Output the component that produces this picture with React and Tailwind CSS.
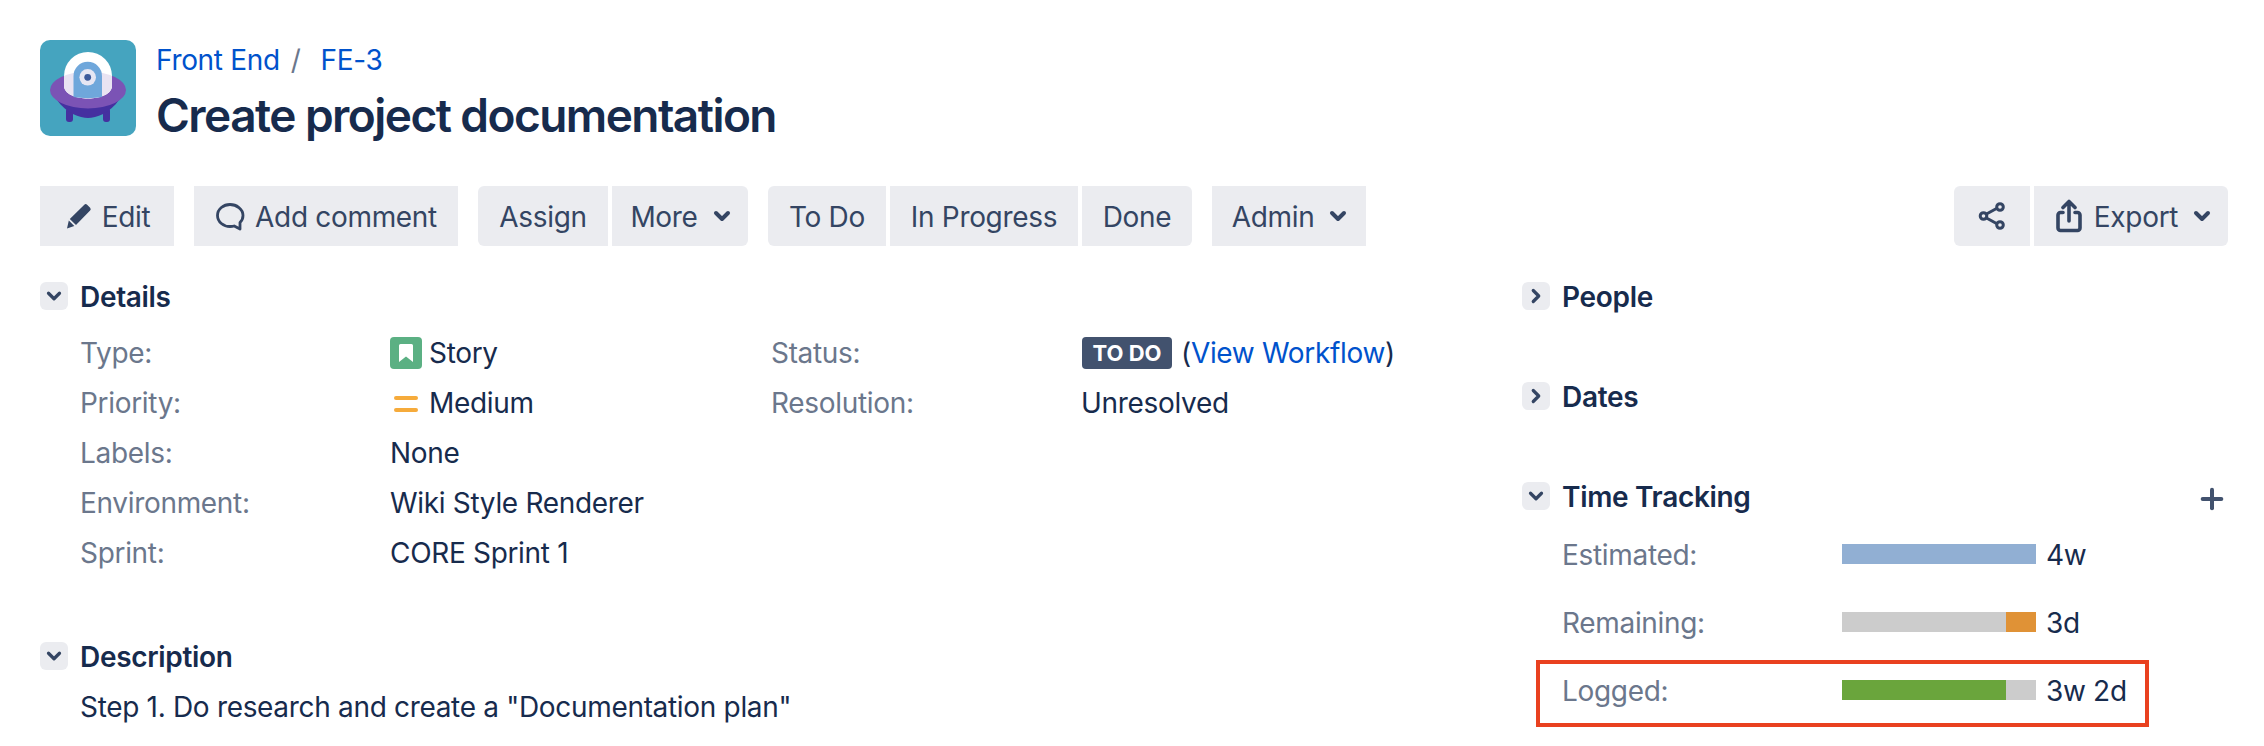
import { ChevronDown, ChevronRight, Plus } from "lucide-react";

const detailsLeft = [
  ["Type:", <span className="flex items-center gap-[7px]"><StoryIcon />Story</span>],
  ["Priority:", <span className="flex items-center gap-[7px]"><MediumIcon />Medium</span>],
  ["Labels:", "None"],
  ["Environment:", "Wiki Style Renderer"],
  ["Sprint:", "CORE Sprint 1"],
];

function Logo() {
  const dome = "M24 36 a24 24 0 0 1 48 0 V46 C72 54 60 58.500 48 58.500 C36 58.500 24 54 24 46 Z";
  return (
    <svg width="96" height="96" viewBox="0 0 96 96" className="shrink-0">
      <defs>
        <clipPath id="saucer"><ellipse cx="48" cy="50" rx="38" ry="18.500" /></clipPath>
      </defs>
      <rect width="96" height="96" rx="10" fill="#45A4BF" />
      <rect x="26" y="68" width="7" height="14" rx="3" fill="#4530A0" />
      <rect x="63" y="68" width="7" height="14" rx="3" fill="#4530A0" />
      <path d="M17 60 C26 73 40 78 48 78 C56 78 70 73 79 60 Z" fill="#4530A0" />
      <ellipse cx="48" cy="50" rx="38" ry="18.500" fill="#7B53B5" />
      <path d={dome} fill="#FFFFFF" />
      <path clipPath="url(#saucer)" d={dome} fill="#E9E3F2" />
      <path d="M33.500 36 a14.250 14.250 0 0 1 28.500 0 V57 C54 58.500 42 58.500 33.500 57 Z" fill="#6FA7DB" />
      <circle cx="47.700" cy="37.300" r="8.300" fill="#E6E6F3" />
      <circle cx="47.700" cy="37.300" r="3.400" fill="#3D5A9B" />
    </svg>
  );
}

function StoryIcon() {
  return (
    <svg width="32" height="32" viewBox="0 0 32 32" className="shrink-0">
      <rect width="32" height="32" rx="4" fill="#5BB083" />
      <path d="M9 8.500 a1.500 1.500 0 0 1 1.500 -1.500 h11 a1.500 1.500 0 0 1 1.500 1.500 V25 L16 19.500 L9 25 Z" fill="#FFFFFF" />
    </svg>
  );
}

function MediumIcon() {
  return (
    <svg width="32" height="32" viewBox="0 0 32 32" className="shrink-0">
      <rect x="4" y="9" width="24" height="4" rx="2" fill="#F6AB3B" />
      <rect x="4" y="21" width="24" height="4" rx="2" fill="#F6AB3B" />
    </svg>
  );
}

function PenIcon() {
  return (
    <svg width="30" height="30" viewBox="0 0 30 30" className="shrink-0">
      <path d="M20.300 3.800 a2 2 0 0 1 2.800 0 l3 3 a2 2 0 0 1 0 2.800 L12 24 L5.800 17.900 Z M4.800 19.600 L10.300 25 L3 27.500 Z" fill="#344563" />
    </svg>
  );
}

function CommentIcon() {
  return (
    <svg width="30" height="30" viewBox="0 0 30 30" className="shrink-0" fill="none">
      <path d="M15 3.500 C8.600 3.500 2.500 7.900 2.500 14.500 c0 6.600 6.100 11 12.500 11 c1.100 0 2.900 -.1 4.200 -.5 l5.800 3 v-6.500 c1.800 -1.700 3 -4.100 3 -7 C28 7.900 21.400 3.500 15 3.500 Z" stroke="#344563" strokeWidth="2.800" strokeLinejoin="round" />
    </svg>
  );
}

function ShareIcon() {
  return (
    <svg width="30" height="30" viewBox="0 0 30 30" className="shrink-0" fill="none" stroke="#344563" strokeWidth="3">
      <path d="M9.500 13 L19.500 7.500 M9.500 17 L19.500 22.500" />
      <circle cx="6.500" cy="15" r="3.300" />
      <circle cx="23" cy="6" r="3.300" />
      <circle cx="23" cy="24" r="3.300" />
    </svg>
  );
}

function ExportIcon() {
  return (
    <svg width="26" height="34" viewBox="0 0 26 34" className="shrink-0" fill="none" stroke="#344563" strokeWidth="3.600" strokeLinecap="round" strokeLinejoin="round">
      <path d="M7 13.500 H4.500 a2.500 2.500 0 0 0 -2.500 2.500 V29 a2.500 2.500 0 0 0 2.500 2.500 h17 a2.500 2.500 0 0 0 2.500 -2.500 V16 a2.500 2.500 0 0 0 -2.500 -2.500 H19" />
      <path d="M13 22 V3 M7 8.500 L13 2.500 L19 8.500" />
    </svg>
  );
}

function Btn({ children, className = "" }) {
  return (
    <button className={"h-[60px] flex items-center justify-center bg-[#EBECF0] text-[#344563] text-[28px] rounded-none " + className}>
      {children}
    </button>
  );
}

function BtnText({ children }) {
  return <span className="mt-[2px]">{children}</span>;
}

function Caret() {
  return <ChevronDown size={24} strokeWidth={4} color="#344563" className="shrink-0" />;
}

function SectionHead({ title, open = true, action }) {
  return (
    <div className="flex items-center h-7">
      <span className="w-7 h-7 rounded-md bg-[#EBECF0] flex items-center justify-center mr-3">
        {open ? <ChevronDown size={22} strokeWidth={3.500} color="#344563" /> : <ChevronRight size={22} strokeWidth={3.500} color="#344563" />}
      </span>
      <h4 className="font-semibold text-[28px] text-[#172B4D] mt-[2px]">{title}</h4>
      {action}
    </div>
  );
}

function Row({ label, children }) {
  return (
    <div className="flex items-center h-[50px]">
      <span className="w-[310px] text-[#6B778C]">{label}</span>
      <div>{children}</div>
    </div>
  );
}

function TimeBar({ label, value, bg, fill, fillWidth, fillRight }) {
  return (
    <div className="flex items-center h-5">
      <span className="w-[280px] ml-10 mt-[2px] text-[#6B778C]">{label}</span>
      <div className={"w-[194px] h-5 flex " + bg + (fillRight ? " justify-end" : "")}>
        <div className={"h-5 " + fill} style={{ width: fillWidth }} />
      </div>
      <span className="ml-[10px] mt-[2px]">{value}</span>
    </div>
  );
}

export default function App() {
  return (
    <div className="h-[746px] overflow-hidden bg-white pl-10 pr-9 pt-10 text-[#172B4D] text-[28px] leading-[50px] tracking-[-0.32px]" style={{ fontFamily: "Inter, sans-serif" }}>

      {/* HEADER */}
      <div className="flex items-start h-24">
        <Logo />
        <div className="ml-[20px]">
          <div className="flex items-center h-10 text-[#0052CC] leading-10">
            <a>Front End</a>
            <span className="text-[#6B778C] ml-[11px] mr-[20px]">/</span>
            <a>FE-3</a>
          </div>
          <h1 className="text-[46px] font-semibold leading-[56px] tracking-[-1.55px] mt-[7px]">Create project documentation</h1>
        </div>
      </div>

      {/* TOOLBAR */}
      <div className="flex mt-[50px] leading-none">
        <Btn className="w-[134px] rounded-md gap-2"><PenIcon /><BtnText>Edit</BtnText></Btn>
        <Btn className="w-[264px] ml-5 rounded-md gap-[10px]"><CommentIcon /><BtnText>Add comment</BtnText></Btn>
        <Btn className="w-[130px] ml-5 rounded-l-md"><BtnText>Assign</BtnText></Btn>
        <Btn className="w-[136px] ml-1 rounded-r-md gap-3 pl-1"><BtnText>More</BtnText><Caret /></Btn>
        <Btn className="w-[118px] ml-5 rounded-l-md"><BtnText>To Do</BtnText></Btn>
        <Btn className="w-[188px] ml-1"><BtnText>In Progress</BtnText></Btn>
        <Btn className="w-[110px] ml-1 rounded-r-md"><BtnText>Done</BtnText></Btn>
        <Btn className="w-[154px] ml-5 rounded-md gap-3 pl-1"><BtnText>Admin</BtnText><Caret /></Btn>
        <div className="flex-1" />
        <Btn className="w-[76px] rounded-l-md"><ShareIcon /></Btn>
        <Btn className="w-[194px] ml-1 rounded-r-md gap-3 pl-2"><ExportIcon /><BtnText>Export</BtnText><Caret /></Btn>
      </div>

      {/* BODY */}
      <div className="flex mt-9">
        <div className="w-[1482px]">
          <SectionHead title="Details" />
          <div className="flex mt-[18px] ml-10">
            <div className="w-[691px]">
              {detailsLeft.map(([label, value]) => (
                <Row key={label} label={label}>{value}</Row>
              ))}
            </div>
            <div>
              <Row label="Status:">
                <span className="flex items-center ml-px">
                  <span className="h-8 w-[90px] rounded-[4px] bg-[#42526E] text-white font-bold text-[22px] leading-8 text-center tracking-normal">TO DO</span>
                  <span className="ml-[9px]">(<a className="text-[#0052CC]">View Workflow</a>)</span>
                </span>
              </Row>
              <Row label="Resolution:">Unresolved</Row>
            </div>
          </div>
          <div className="mt-16">
            <SectionHead title="Description" />
            <p className="ml-10 mt-[12px]">Step 1. Do research and create a "Documentation plan"</p>
          </div>
        </div>

        <div className="flex-1">
          <SectionHead title="People" open={false} />
          <div className="mt-[72px]"><SectionHead title="Dates" open={false} /></div>
          <div className="mt-[72px]">
            <SectionHead
              title="Time Tracking"
              action={<Plus size={32} strokeWidth={3} color="#42526E" className="ml-auto mt-[6px]" />}
            />
            <div className="mt-[34px] leading-5">
              <TimeBar label="Estimated:" value="4w" bg="bg-[#91AFD3]" fill="bg-[#91AFD3]" fillWidth={0} />
              <div className="mt-12">
                <TimeBar label="Remaining:" value="3d" bg="bg-[#CCCCCC]" fill="bg-[#E09236]" fillWidth={30} fillRight />
              </div>
              <div className="relative mt-12">
                <TimeBar label="Logged:" value="3w 2d" bg="bg-[#CCCCCC]" fill="bg-[#6AA53C]" fillWidth={164} />
                {/* annotation frame */}
                <div className="absolute left-[14px] top-[-20px] w-[613px] h-[67px] border-4 border-[#E9411F]" />
              </div>
            </div>
          </div>
        </div>
      </div>

    </div>
  );
}
